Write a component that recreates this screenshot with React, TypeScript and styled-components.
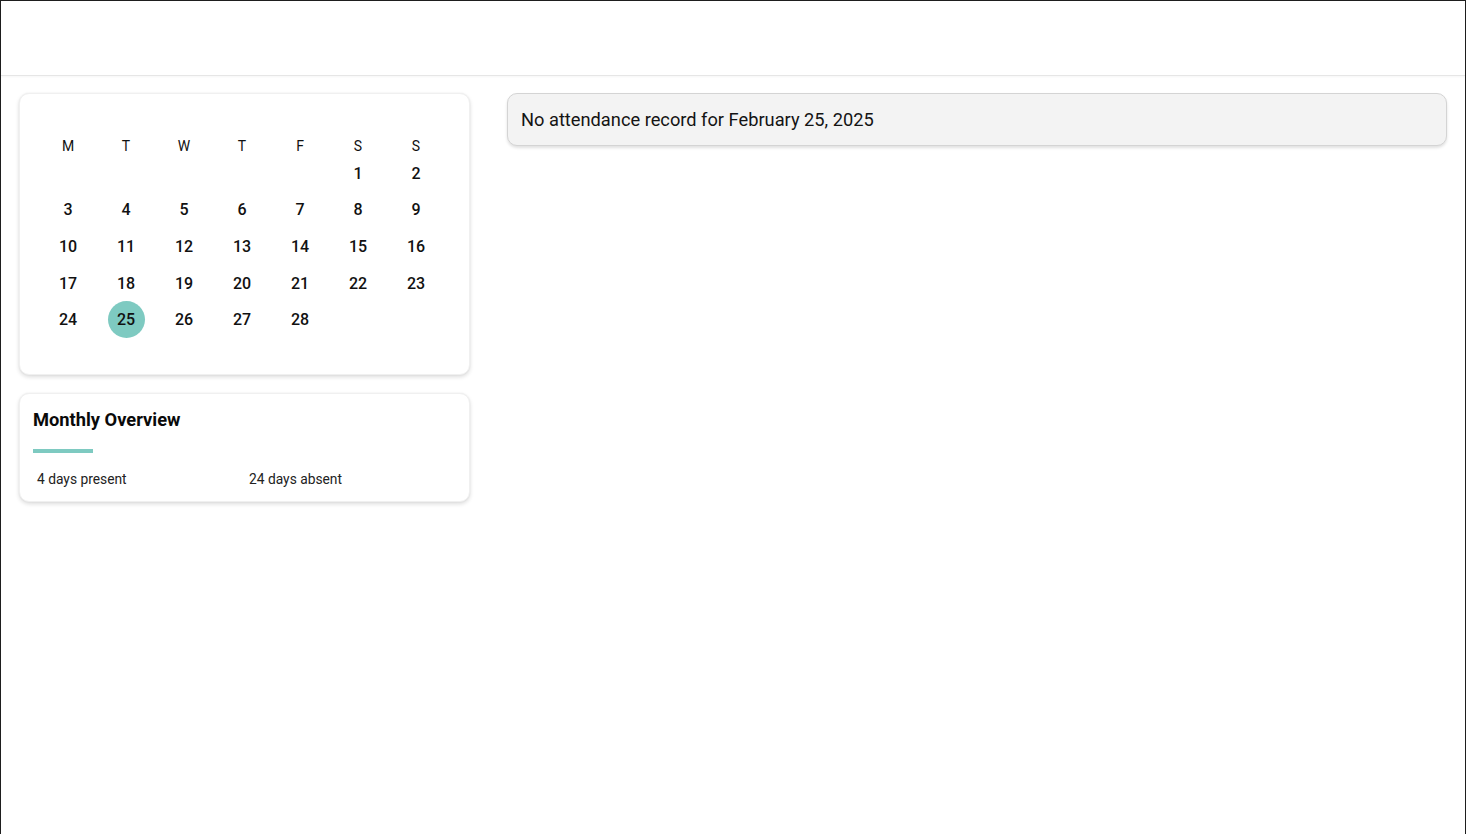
import React from "react";
import styled, { createGlobalStyle } from "styled-components";

const Global = createGlobalStyle`
  html, body { margin: 0; padding: 0; background: #ffffff; }
  body { font-family: Roboto, "Liberation Sans", sans-serif; color: #111; }
  * { box-sizing: border-box; }
`;

const Frame = styled.div`
  min-height: 834px;
  border-top: 1px solid #1e1e1e;
  border-left: 1px solid #1e1e1e;
  border-right: 1px solid #1e1e1e;
  display: flex;
  flex-direction: column;
`;

const Header = styled.header`
  height: 75px;
  background: #fff;
  border-bottom: 1px solid #e6e6e6;
  box-shadow: 0 1px 2px rgba(0, 0, 0, 0.04);
`;

const Main = styled.main`
  display: flex;
  align-items: flex-start;
  gap: 37px;
  padding: 17px 18px 0 18px;
`;

const LeftColumn = styled.div`
  width: 451px;
  display: flex;
  flex-direction: column;
  gap: 18px;
  flex-shrink: 0;
`;

const Card = styled.section`
  background: #fff;
  border-radius: 10px;
  border: 1px solid #f0f0f0;
  box-shadow: 0 2px 4px rgba(0, 0, 0, 0.14), 0 0 2px rgba(0, 0, 0, 0.06);
`;

const CalendarCard = styled(Card)`
  height: 282px;
  padding: 44px 0 0 19px;
`;

const CalGrid = styled.div`
  display: grid;
  grid-template-columns: repeat(7, 58px);
`;

const WeekDay = styled.div`
  height: 17px;
  line-height: 17px;
  text-align: center;
  font-size: 14px;
  font-weight: 400;
  color: #111;
`;

const DayCell = styled.div`
  height: 36.6px;
  display: flex;
  align-items: center;
  justify-content: center;
`;

const Day = styled.span<{ $selected?: boolean }>`
  width: 37px;
  height: 37px;
  border-radius: 50%;
  display: flex;
  align-items: center;
  justify-content: center;
  font-size: 16px;
  font-weight: 500;
  color: #111;
  background: ${(p) => (p.$selected ? "#7ecac1" : "transparent")};
`;

const OverviewCard = styled(Card)`
  height: 109px;
  padding: 15px 14px 0 13px;
`;

const Title = styled.h2`
  margin: 0;
  font-size: 18.3px;
  line-height: 22px;
  font-weight: 700;
  color: #0a0a0a;
`;

const Accent = styled.div`
  width: 60px;
  height: 4px;
  margin-top: 18px;
  background: #7ecac1;
`;

const Stats = styled.div`
  display: grid;
  grid-template-columns: 212px 1fr;
  margin-top: 18px;
  padding-left: 4px;
`;

const Stat = styled.span`
  font-size: 13.8px;
  line-height: 16px;
  color: #222;
`;

const Notice = styled.div`
  flex: 1;
  height: 53px;
  display: flex;
  align-items: center;
  padding: 0 13px;
  background: #f3f3f3;
  border: 1px solid #d4d4d4;
  border-radius: 10px;
  box-shadow: 0 2px 3px rgba(0, 0, 0, 0.12);
  font-size: 18.25px;
  color: #141414;
`;

const weekDays = ["M", "T", "W", "T", "F", "S", "S"];

export default function App() {
  const cells: (number | null)[] = [null, null, null, null, null];
  for (let d = 1; d <= 28; d++) cells.push(d);
  while (cells.length % 7 !== 0) cells.push(null);

  return (
    <>
      <Global />
      <Frame>
        <Header />
        <Main>
          <LeftColumn>
            <CalendarCard>
              <CalGrid>
                {weekDays.map((w, i) => (
                  <WeekDay key={i}>{w}</WeekDay>
                ))}
                {cells.map((d, i) => (
                  <DayCell key={i}>
                    {d !== null && <Day $selected={d === 25}>{d}</Day>}
                  </DayCell>
                ))}
              </CalGrid>
            </CalendarCard>
            <OverviewCard>
              <Title>Monthly Overview</Title>
              <Accent />
              <Stats>
                <Stat>4 days present</Stat>
                <Stat>24 days absent</Stat>
              </Stats>
            </OverviewCard>
          </LeftColumn>
          <Notice>No attendance record for February 25, 2025</Notice>
        </Main>
      </Frame>
    </>
  );
}
